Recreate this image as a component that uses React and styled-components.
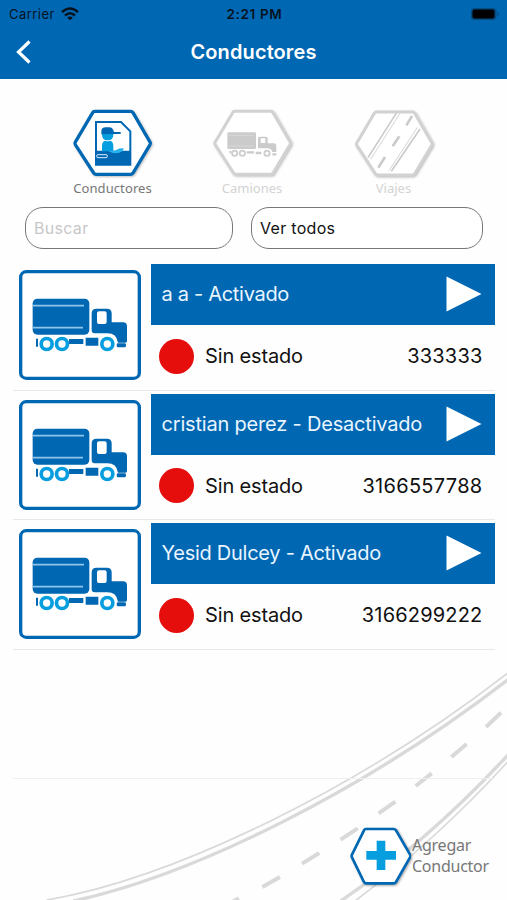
import React from 'react';
import styled, { createGlobalStyle } from 'styled-components';

const BLUE = '#0067b3';
const CYAN = '#079edf';

const GlobalStyle = createGlobalStyle`
  *, *::before, *::after { box-sizing: border-box; }
  body { margin: 0; background: #fefefe; }
`;

const Screen = styled.div`
  position: relative;
  display: flex;
  flex-direction: column;
  width: 507px;
  height: 900px;
  overflow: hidden;
  background: #fefefe;
  color: #111;
  font-family: Inter, 'Liberation Sans', sans-serif;
`;

const Road = styled.svg`
  position: absolute;
  left: 0;
  bottom: 0;
  width: 507px;
  height: 260px;
`;

const Header = styled.header`
  height: 79px;
  background: ${BLUE};
`;

const StatusBar = styled.div`
  display: grid;
  grid-template-columns: 1fr auto 1fr;
  align-items: center;
  height: 27px;
  padding: 0 7px 0 9px;
  font-size: 13px;
  color: #06131f;
`;

const Carrier = styled.span`
  display: flex;
  align-items: center;
  gap: 6.5px;
  letter-spacing: 0.45px;
`;

const Clock = styled.span`
  font-weight: 600;
  font-size: 13.5px;
  letter-spacing: 0.65px;
`;

const StatusIcon = styled.svg`
  display: block;
  justify-self: end;
`;

const NavBar = styled.div`
  display: grid;
  grid-template-columns: 60px 1fr 60px;
  align-items: center;
  height: 50px;
`;

const BackButton = styled.button`
  display: flex;
  padding: 0 0 0 16px;
  border: 0;
  background: none;
`;

const Title = styled.h1`
  margin: 0;
  text-align: center;
  font-size: 20px;
  line-height: 24px;
  font-weight: 600;
  color: #fff;
  letter-spacing: 0.1px;
`;

const Tabs = styled.nav`
  display: flex;
  gap: 30px;
  height: 128px;
  padding: 21px 0 0 60px;
`;

const Tab = styled.div`
  display: flex;
  flex-direction: column;
  align-items: center;
  width: 110px;
  color: ${(p) => (p.$active ? '#777' : '#d3d3d3')};
`;

const TabIcon = styled.svg`
  display: block;
  flex: none;
  width: 110px;
  height: 80px;
  filter: drop-shadow(1.5px 1.5px 1px rgba(0, 0, 0, 0.25));
`;

const TabLabel = styled.span`
  margin-left: ${(p) => p.$shift}px;
  font: 13px/16px 'Noto Sans', sans-serif;
  letter-spacing: ${(p) => p.$spacing}px;
`;

const Filters = styled.div`
  display: grid;
  grid-template-columns: 208px 232px;
  gap: 18px;
  padding-left: 25px;
`;

const Field = styled.div`
  display: flex;
  align-items: center;
  height: 42px;
  padding-left: 8px;
  border: 1.5px solid #777;
  border-radius: 18px;
  background: #fff;
  font-size: 16px;
  color: ${(p) => (p.$placeholder ? '#c7c7c9' : '#111')};
  letter-spacing: 0.3px;
`;

const List = styled.main`
  position: relative;
  margin: 12px 12.5px 0 13px;
`;

const Row = styled.section`
  display: grid;
  grid-template-columns: 138px 1fr;
  height: 129.5px;
  border-bottom: 1px solid #e8e8e8;
`;

const TruckBadge = styled.svg`
  display: block;
  width: 122px;
  height: 110px;
  margin: 9px 0 0 6px;
`;

const Details = styled.div`
  padding-top: 3px;
`;

const DriverBar = styled.div`
  display: flex;
  align-items: center;
  justify-content: space-between;
  height: 61px;
  padding: 0 12.5px 1px 10.5px;
  background: ${BLUE};
  color: #e9f5ff;
  font-size: 20px;
  letter-spacing: ${(p) => p.$spacing}px;
`;

const StatusLine = styled.div`
  display: flex;
  align-items: center;
  height: 62px;
  padding: 0 12px 0 8px;
  font-size: 20px;
`;

const Dot = styled.span`
  width: 35px;
  height: 35px;
  margin-right: 11px;
  border-radius: 50%;
  background: #e60d0d;
`;

const Status = styled.span`
  flex: 1;
  letter-spacing: -0.15px;
`;

const Phone = styled.span`
  letter-spacing: ${(p) => p.$spacing}px;
`;

const EmptyRow = styled.div`
  height: 129.5px;
  border-bottom: 1px solid #f0f0f0;
`;

const AddDriver = styled.button`
  position: absolute;
  right: 16px;
  bottom: 12px;
  display: flex;
  align-items: center;
  gap: 1px;
  padding: 0;
  border: 0;
  background: none;
  color: #777;
  text-align: left;
  font: 16px/21px 'Noto Sans', sans-serif;
  letter-spacing: -0.25px;
`;

const AddIcon = styled.svg`
  display: block;
  width: 64px;
  height: 64px;
  filter: drop-shadow(1px 1px 1px rgba(0, 0, 0, 0.35));
`;

const AddText = styled.span`
  width: 79px;
`;

function TruckIcon() {
  return (
    <TruckBadge viewBox="12 15 366 330">
      <rect x="17" y="20" width="356" height="320" rx="17" fill="#fff" stroke={BLUE} strokeWidth="10" />
      <rect x="53" y="101" width="170" height="108" rx="14" fill={BLUE} />
      <path d="M53 122H207M53 188H204" stroke="#8fc5eb" strokeWidth="5" />
      <path
        fill={BLUE}
        fillRule="evenodd"
        d="M230 145q0-14 14-14h32q14 0 14 14v27h34q12 0 12 12v44q0 5-5 5h-22q-4-28-32-28h-38q-9 0-9-9zM252 139q-6 0-6 6v26q0 6 6 6h17q6 0 6-6v-26q0-6-6-6z"
      />
      <path fill={BLUE} d="M63 221h6v24h-6zM162 222h43v15h-43zM212 218h38v24h-38zM308 235h22q3 0 3 6t-3 6h-22q-3 0-3-6t3-6z" />
      <g fill="#fff" stroke={CYAN} strokeWidth="11">
        <circle cx="95" cy="237" r="16.5" />
        <circle cx="141" cy="237" r="16.5" />
        <circle cx="277" cy="237" r="16.5" />
      </g>
    </TruckBadge>
  );
}

const HEX = 'M104 34H212Q216 34 219 38L270 126Q273 130 270 134L219 219Q216 223 212 223H108Q104 223 101 219L46 134Q43 130 46 126L98 38Q100 34 104 34Z';

function DriverTab() {
  return (
    <TabIcon viewBox="0 0 330 240">
      <path d={HEX} fill="#fff" stroke={BLUE} strokeWidth="10" />
      <path d="M108 66H183L211 94V194H108Z" fill="#fff" stroke={BLUE} strokeWidth="6" />
      <path d="M108 152H211V195H108Z" fill={BLUE} />
      <rect x="110" y="164" width="32" height="9" rx="4" fill={BLUE} stroke="#d8eeff" strokeWidth="3" />
      <path d="M126 98h34v6q0 17-17 17t-17-17z" fill={CYAN} />
      <path d="M124 103V94q0-12 13-12h11q11 0 14 14h20v6h-22z" fill={BLUE} />
      <path d="M126 154v-16q0-14 10-16 7 4 14 0 10 2 10 16v16z" fill={CYAN} />
      <path d="M142 150q16 6 28-1 8-5 21-4-2 11-13 13-22 5-36-8z" fill="#28b2ec" />
    </TabIcon>
  );
}

function TruckTab() {
  return (
    <TabIcon viewBox="0 0 330 240">
      <path d={HEX} fill="#fff" stroke="#d2d2d2" strokeWidth="9" />
      <rect x="82" y="97" width="86" height="50" rx="4" fill="#cbcbcb" />
      <path d="M82 106H162M82 138H162" stroke="#dedede" strokeWidth="2" />
      <path
        fill="#cbcbcb"
        fillRule="evenodd"
        d="M174 115q0-5 5-5h19q5 0 5 5v15h19q7 0 7 7v19h-12q-3-11-15-11h-28zM182 115v14h14v-14z"
      />
      <path d="M88 156h5M140 157h22M167 159h17M217 163h12" stroke="#cbcbcb" strokeWidth="7" />
      <g fill="#fff" stroke="#cbcbcb" strokeWidth="5">
        <circle cx="104" cy="160" r="8" />
        <circle cx="127" cy="160" r="8" />
        <circle cx="201" cy="160" r="8" />
      </g>
    </TabIcon>
  );
}

function RoadTab() {
  return (
    <TabIcon viewBox="0 0 330 240">
      <path d={HEX} transform="translate(5 2)" fill="#fff" stroke="#d2d2d2" strokeWidth="9" />
      <g fill="none" stroke="#cbcbcb">
        <path d="M170 38L84 173M240 87L154 214" strokeWidth="5" />
        <path d="M180 40L92 178M232 82L147 212" strokeWidth="2.5" />
        <path d="M216 48L199 76M178 109L158 139M135 171L115 203" strokeWidth="8" />
      </g>
    </TabIcon>
  );
}

const drivers = [
  { name: 'a a - Activado', phone: '333333', spacing: -0.3, phoneSpacing: 0.2 },
  { name: 'cristian perez - Desactivado', phone: '3166557788', spacing: -0.19, phoneSpacing: 0.3 },
  { name: 'Yesid Dulcey - Activado', phone: '3166299222', spacing: -0.27, phoneSpacing: 0.18 },
];

export default function App() {
  return (
    <Screen>
      <GlobalStyle />
      <Road viewBox="0 0 1521 780" fill="none" stroke="#d9d9d9">
        <path d="M140 780C520 715 1080 445 1530 94" strokeWidth="5" />
        <path d="M220 783C580 705 1090 455 1530 114" strokeWidth="10" />
        <path d="M1018 786Q1290 600 1530 338" strokeWidth="10" />
        <path d="M1066 782Q1310 600 1530 358" strokeWidth="5" />
        <path
          d="M1503 218L1458 261M1400 312L1354 351M1295 400L1247 438M1186 485L1136 520M1073 565L1022 599M958 639L906 671M840 711L787 741M717 775L690 789"
          strokeWidth="12"
        />
      </Road>
      <Header>
        <StatusBar>
          <Carrier>
            Carrier
            <StatusIcon width="18" height="14" viewBox="0 0 18 14" fill="none" stroke="#06131f" strokeWidth="2.5">
              <path d="M1 5.2Q9-2.2 17 5.2M4 8.5q5-4.4 10 0" />
              <path d="M9 13.3L6.1 10.7Q9 8.4 11.9 10.7Z" fill="#06131f" stroke="none" />
            </StatusIcon>
          </Carrier>
          <Clock>2:21 PM</Clock>
          <StatusIcon width="30" height="14" viewBox="0 0 30 14">
            <rect x="1" y="1" width="25.5" height="12" rx="3.5" fill="#054b80" />
            <rect x="2.5" y="2.5" width="22" height="9" rx="2" fill="#000" />
            <path d="M27.6 5v4q1.6-.7 1.6-2t-1.6-2z" fill="#054b80" />
          </StatusIcon>
        </StatusBar>
        <NavBar>
          <BackButton aria-label="Volver">
            <svg width="16" height="26" viewBox="0 0 16 26" fill="none" stroke="#fff" strokeWidth="3.2">
              <path d="M13.5 2.5L2.5 13L13.5 23.5" />
            </svg>
          </BackButton>
          <Title>Conductores</Title>
        </NavBar>
      </Header>
      <Tabs>
        <Tab $active>
          <DriverTab />
          <TabLabel $shift={-5} $spacing={0.1}>Conductores</TabLabel>
        </Tab>
        <Tab>
          <TruckTab />
          <TabLabel $shift={-6} $spacing={0}>Camiones</TabLabel>
        </Tab>
        <Tab>
          <RoadTab />
          <TabLabel $shift={-3} $spacing={0}>Viajes</TabLabel>
        </Tab>
      </Tabs>
      <Filters>
        <Field $placeholder>Buscar</Field>
        <Field>Ver todos</Field>
      </Filters>
      <List>
        {drivers.map((d) => (
          <Row key={d.phone}>
            <TruckIcon />
            <Details>
              <DriverBar $spacing={d.spacing}>
                {d.name}
                <svg width="36" height="36" viewBox="0 0 36 36">
                  <path d="M0.5 0.5V35.5L35.5 18Z" fill="#fff" />
                </svg>
              </DriverBar>
              <StatusLine>
                <Dot />
                <Status>Sin estado</Status>
                <Phone $spacing={d.phoneSpacing}>{d.phone}</Phone>
              </StatusLine>
            </Details>
          </Row>
        ))}
        <EmptyRow />
      </List>
      <AddDriver>
        <AddIcon viewBox="0 0 192 192">
          <path
            d="M56 15H140Q144 15 147 19L189 92Q191 96 189 100L147 174Q144 178 140 178H58Q54 178 51 174L15 100Q13 96 15 92L51 19Q53 15 56 15Z"
            fill="#fff"
            stroke={BLUE}
            strokeWidth="8"
          />
          <path d="M89 50h26v31h32v26h-32v31H89v-31H58V81h31z" fill={CYAN} />
        </AddIcon>
        <AddText>Agregar Conductor</AddText>
      </AddDriver>
    </Screen>
  );
}
